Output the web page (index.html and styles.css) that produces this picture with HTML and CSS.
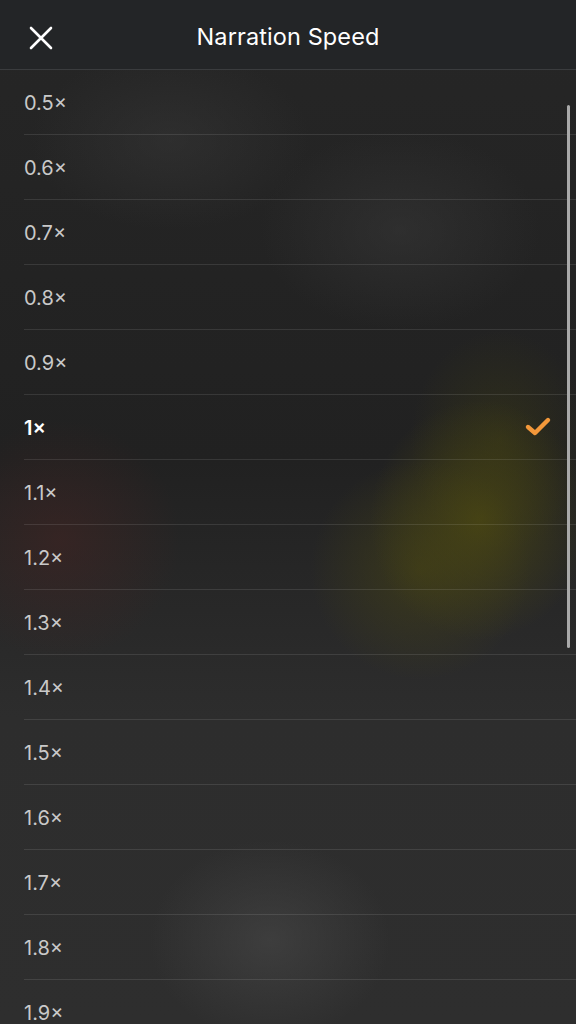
FILE: index.html
```html
<!DOCTYPE html>
<html lang="en">
<head>
  <meta charset="UTF-8">
  <title>Narration Speed</title>
  <link rel="stylesheet" href="styles.css">
</head>
<body>
  <div class="screen">
    <header class="topbar">
      <button class="close" aria-label="Close">
        <svg width="24" height="24" viewBox="0 0 24 24">
          <path d="M2 2 L22 22 M22 2 L2 22" stroke="#fff" stroke-width="2.6" stroke-linecap="round" fill="none"/>
        </svg>
      </button>
      <h1>Narration Speed</h1>
    </header>

    <div class="list">
      <ul id="speeds"></ul>
      <div class="scrollbar"></div>
    </div>
  </div>

  <script>
    const speeds = ['0.5', '0.6', '0.7', '0.8', '0.9', '1', '1.1', '1.2', '1.3', '1.4', '1.5', '1.6', '1.7', '1.8', '1.9'];
    const current = '1';
    const check = '<svg width="28" height="22" viewBox="0 0 28 22"><path d="M4 11 L11 17 L24 4" stroke="#f3983a" stroke-width="4.4" stroke-linecap="round" stroke-linejoin="round" fill="none"/></svg>';

    document.getElementById('speeds').innerHTML = speeds.map(s =>
      `<li class="${s === current ? 'selected' : ''}"><span>${s}×</span>${s === current ? check : ''}</li>`
    ).join('');
  </script>
</body>
</html>
```

FILE: styles.css
```css
body {
  margin: 0;
  background: #2b2b2b;
  font-family: Inter, 'Liberation Sans', sans-serif;
  overflow: hidden;
}

.screen {
  width: 576px;
  height: 1024px;
  display: flex;
  flex-direction: column;
  background:
    radial-gradient(ellipse 110px 120px at 480px 520px, rgba(80, 76, 16, 0.7), transparent),
    radial-gradient(ellipse 110px 110px at 420px 570px, rgba(74, 70, 18, 0.55), transparent),
    radial-gradient(ellipse 90px 110px at 500px 440px, rgba(64, 62, 18, 0.45), transparent),
    radial-gradient(ellipse 120px 120px at 60px 540px, rgba(70, 36, 34, 0.5), transparent),
    radial-gradient(ellipse 120px 100px at 270px 940px, rgba(72, 72, 72, 0.6), transparent),
    radial-gradient(ellipse 140px 100px at 400px 230px, rgba(60, 60, 60, 0.45), transparent),
    radial-gradient(ellipse 140px 90px at 170px 140px, rgba(58, 58, 58, 0.45), transparent),
    linear-gradient(180deg, #262626 0%, #212121 45%, #2d2d2d 70%, #2e2e2e 100%);
}

.topbar {
  height: 69px;
  flex: none;
  display: flex;
  align-items: center;
  justify-content: center;
  position: relative;
  background: #232527;
  border-bottom: 1px solid #3a3c3e;
}

.topbar h1 {
  margin: 4px 0 0;
  font-size: 23.5px;
  font-weight: 400;
  color: #fff;
  letter-spacing: 0.1px;
}

.close {
  position: absolute;
  left: 29px;
  top: 26px;
  padding: 0;
  border: none;
  background: none;
  display: flex;
}

.list {
  flex: 1;
  position: relative;
  overflow: hidden;
}

.list ul {
  list-style: none;
  margin: 0;
  padding: 0 0 0 24px;
}

.list li {
  height: 64px;
  display: flex;
  align-items: center;
  justify-content: space-between;
  padding-right: 24px;
  border-bottom: 1px solid rgba(255, 255, 255, 0.1);
  color: #c9c9c9;
  font-size: 20px;
}

.list li span {
  margin-top: 1px;
}

.list li.selected {
  color: #fff;
  font-weight: 600;
}

.scrollbar {
  position: absolute;
  right: 6px;
  top: 35px;
  width: 3px;
  height: 543px;
  border-radius: 2px;
  background: #a9a9a9;
}
```
